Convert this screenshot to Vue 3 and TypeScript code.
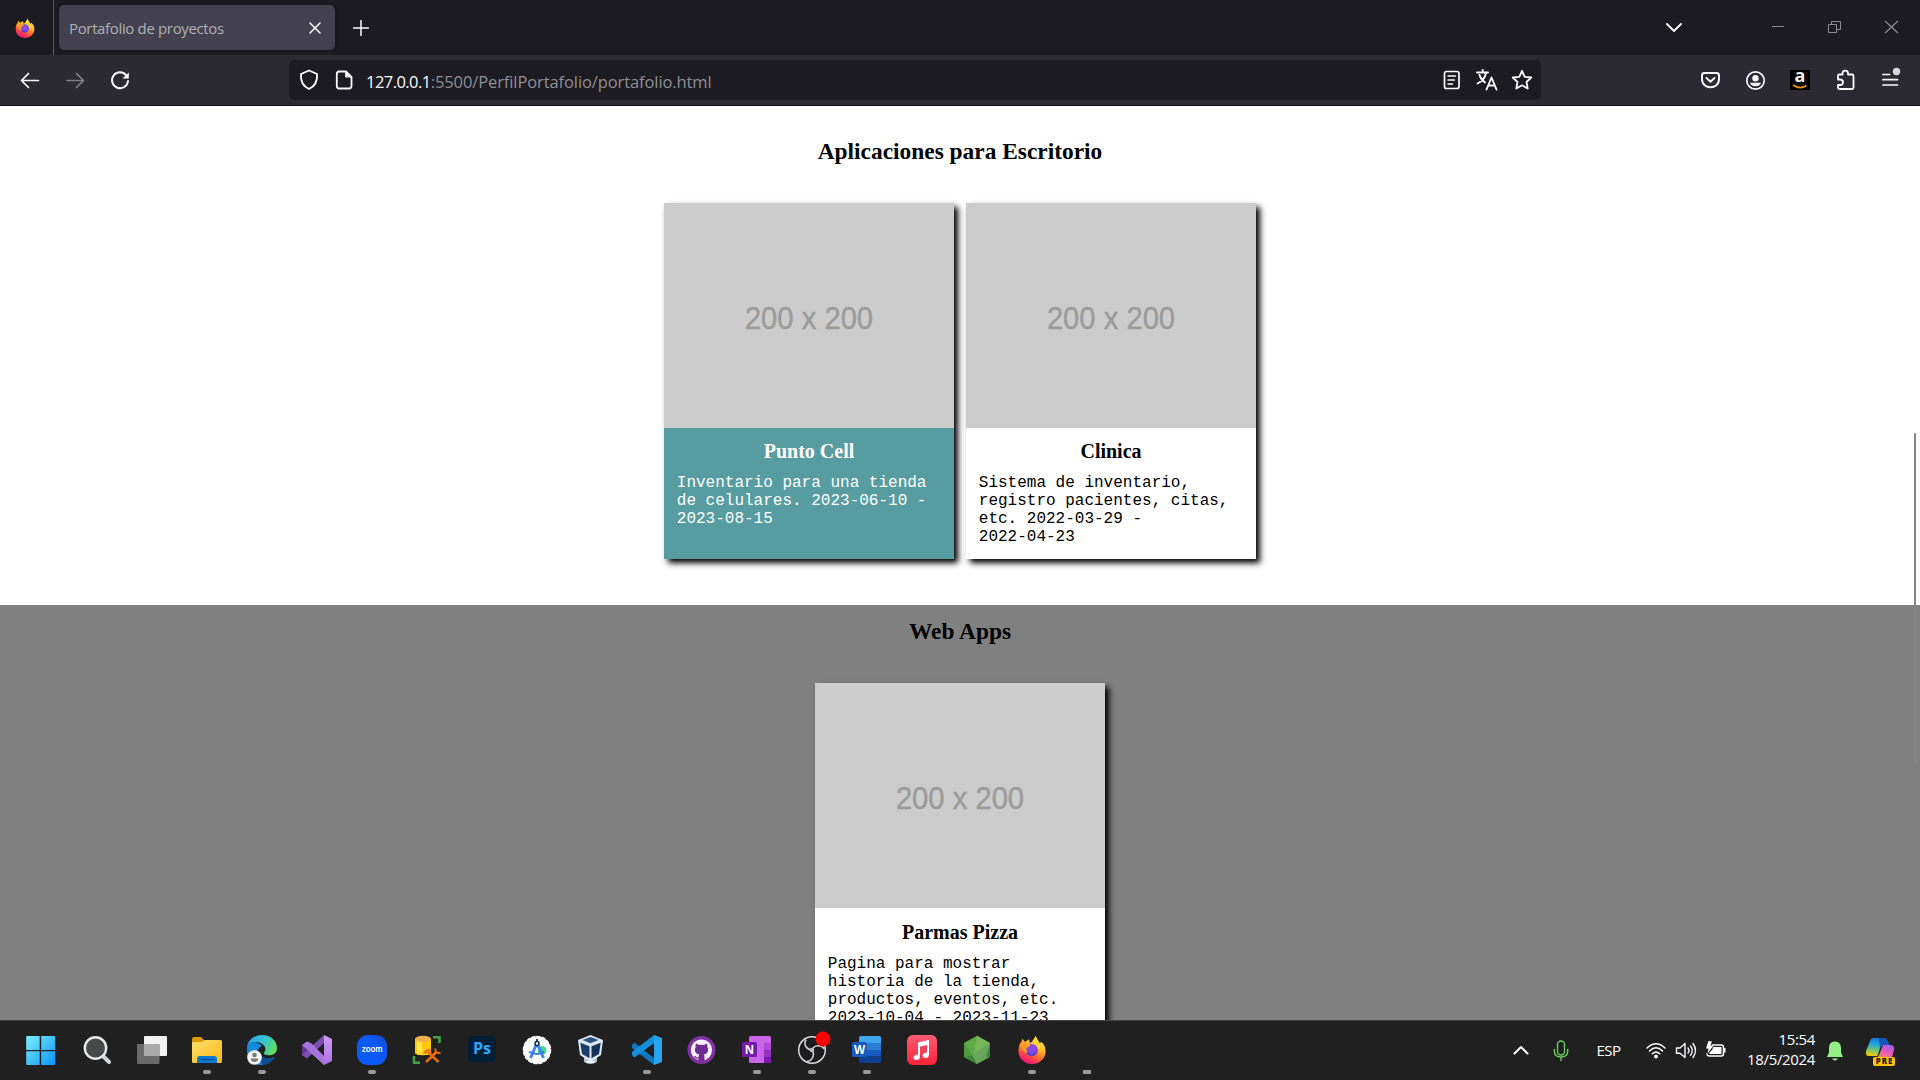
<script setup lang="ts">
interface Project {
  title: string
  lines: string[]
  active?: boolean
}

interface Section {
  title: string
  dark: boolean
  projects: Project[]
}

const sections: Section[] = [
  {
    title: 'Aplicaciones para Escritorio',
    dark: false,
    projects: [
      {
        title: 'Punto Cell',
        lines: ['Inventario para una tienda', 'de celulares. 2023-06-10 -', '2023-08-15'],
        active: true,
      },
      {
        title: 'Clinica',
        lines: ['Sistema de inventario,', 'registro pacientes, citas,', 'etc. 2022-03-29 -', '2022-04-23'],
      },
    ],
  },
  {
    title: 'Web Apps',
    dark: true,
    projects: [
      {
        title: 'Parmas Pizza',
        lines: ['Pagina para mostrar', 'historia de la tienda,', 'productos, eventos, etc.', '2023-10-04 - 2023-11-23'],
      },
    ],
  },
]
</script>

<template>
  <div class="screen">
    <svg class="defs" width="0" height="0" aria-hidden="true">
      <defs>
        <linearGradient id="ffBody" x1="0.8" y1="0" x2="0.3" y2="1">
          <stop offset="0" stop-color="#fff44f" />
          <stop offset="0.35" stop-color="#ffc12e" />
          <stop offset="0.6" stop-color="#ff7a2a" />
          <stop offset="0.8" stop-color="#ff3750" />
          <stop offset="1" stop-color="#e31587" />
        </linearGradient>
        <radialGradient id="ffCore" cx="0.55" cy="0.35" r="0.7">
          <stop offset="0" stop-color="#a14bf5" />
          <stop offset="0.6" stop-color="#7146e0" />
          <stop offset="1" stop-color="#4a3bb5" />
        </radialGradient>
        <linearGradient id="win" x1="0" y1="0" x2="1" y2="1">
          <stop offset="0" stop-color="#7cf0ff" />
          <stop offset="1" stop-color="#0b93f6" />
        </linearGradient>
        <linearGradient id="folder" x1="0" y1="0" x2="1" y2="1">
          <stop offset="0" stop-color="#ffdf6e" />
          <stop offset="1" stop-color="#fbb914" />
        </linearGradient>
        <linearGradient id="edgeTop" x1="0" y1="0.3" x2="1" y2="0.7">
          <stop offset="0" stop-color="#2aa4e8" />
          <stop offset="0.5" stop-color="#35c3cf" />
          <stop offset="1" stop-color="#67e24d" />
        </linearGradient>
        <linearGradient id="vs" x1="0" y1="0" x2="0" y2="1">
          <stop offset="0" stop-color="#d59dff" />
          <stop offset="1" stop-color="#a871e0" />
        </linearGradient>
        <linearGradient id="zoomBg" x1="0" y1="1" x2="1" y2="0">
          <stop offset="0" stop-color="#0b5cff" />
          <stop offset="0.7" stop-color="#0d57f5" />
          <stop offset="1" stop-color="#1a45b8" />
        </linearGradient>
        <linearGradient id="music" x1="0" y1="0" x2="0" y2="1">
          <stop offset="0" stop-color="#ff5c74" />
          <stop offset="1" stop-color="#fa233b" />
        </linearGradient>
        <linearGradient id="copilotA" x1="0.5" y1="0" x2="0.3" y2="1">
          <stop offset="0" stop-color="#1c72e8" />
          <stop offset="0.4" stop-color="#25a9d8" />
          <stop offset="0.75" stop-color="#8ecb5a" />
          <stop offset="1" stop-color="#f2c500" />
        </linearGradient>
        <linearGradient id="copilotB" x1="0.8" y1="0" x2="0.3" y2="1">
          <stop offset="0" stop-color="#a05cf0" />
          <stop offset="0.5" stop-color="#e85ab8" />
          <stop offset="1" stop-color="#ff8f5a" />
        </linearGradient>
        <symbol id="firefox" viewBox="0 0 30 30">
          <path fill="url(#ffBody)" d="M1 17C1 12 2 9 4 7L5 4L7.500 7L9 6.500L12 4.500L12.500 8C14 8.500 15 7 16 5.500C17 4 18 2 19 1C20 5 22 5.500 23 9L24.500 7C28 10 29 13 29 17C29 24.500 22.500 30 15 30C7.500 30 1 24.500 1 17Z" />
          <circle cx="14.700" cy="15.700" r="6.300" fill="url(#ffCore)" />
          <path fill="#ff9a2b" d="M3 10C6 7 11 8 13 10C13.500 12 10.500 12.500 9.500 13.500C9 16 9.500 17 11 18C8 19 4 16 3 10Z" />
          <path fill="#ffd53b" d="M19 1C20 5 22 5.500 23 9C24 12 23 14 22 16C21 11 18 9 15.500 9C17 6 17 4 19 1Z" />
        </symbol>
      </defs>
    </svg>

    <header class="tabs">
      <div class="pinned">
        <svg width="20" height="20"><use href="#firefox" /></svg>
      </div>
      <div class="tab">
        <span class="tab-title">Portafolio de proyectos</span>
        <svg class="line" width="12" height="12" viewBox="0 0 12 12"><path d="M1 1L11 11M11 1L1 11" stroke-width="1.500" /></svg>
      </div>
      <svg class="line new-tab" width="16" height="16" viewBox="0 0 16 16"><path d="M8 .5V15.500M.5 8H15.500" stroke-width="1.500" /></svg>
      <div class="window-buttons">
        <svg class="line list-tabs" width="18" height="12" viewBox="0 0 18 12"><path d="M2 2L9 9L16 2" stroke-width="1.900" /></svg>
        <svg class="win-btn" viewBox="0 0 57 55"><path d="M23 26.500H35" /></svg>
        <svg class="win-btn" viewBox="0 0 57 55"><path d="M22.500 24.500H30.500V32.500H22.500ZM25.500 24.500V21.500H34.500V29.500H30.500" /></svg>
        <svg class="win-btn" viewBox="0 0 57 55"><path d="M22 21L35 33M35 21L22 33" stroke-width="1.200" /></svg>
      </div>
    </header>

    <nav class="toolbar">
      <div class="nav-buttons">
        <svg class="line cell" viewBox="0 0 45 50"><path d="M38.500 25.500H21.500M28.500 18.500L21.500 25.500L28.500 32.500" stroke-width="1.700" /></svg>
        <svg class="line cell dim" viewBox="0 0 45 50"><path d="M22 25.500H38.500M31.500 18.500L38.500 25.500L31.500 32.500" stroke-width="1.700" /></svg>
        <svg class="line cell" viewBox="0 0 45 50">
          <path d="M36.300 20.300A8 8 0 1 0 38 26" stroke-width="1.900" />
          <path d="M38.800 17.500V23.500H32.500Z" fill="#fbfbfe" stroke="none" />
        </svg>
      </div>
      <div class="url">
        <svg class="line shield" width="20" height="22" viewBox="0 0 20 22">
          <path d="M10 1.500L18 5C18.500 11 16.500 17 10 20C3.500 17 1.500 11 2 5Z" stroke-width="1.900" />
        </svg>
        <svg class="line doc" width="18" height="20" viewBox="0 0 18 20">
          <path d="M4 1.500H11L16.500 7V16Q16.500 18.500 14 18.500H4Q1.800 18.500 1.800 16V4Q1.800 1.500 4 1.500Z" stroke-width="1.800" />
          <path d="M11 1.500L16.500 7H11Z" fill="#fbfbfe" />
        </svg>
        <div class="address"><span class="host">127.0.0.1</span><span class="path">:5500/PerfilPortafolio/portafolio.html</span></div>
        <div class="url-actions">
          <svg class="line" width="35" height="24" viewBox="0 0 35 24">
            <rect x="10.500" y="3.500" width="14.500" height="17" rx="2" stroke-width="1.700" />
            <path d="M14 8H21.500M14 12H20.500M14 16H18.500" stroke-width="1.400" />
          </svg>
          <svg class="line" width="35" height="24" viewBox="0 0 35 24">
            <path d="M8 4.500H19M13.700 2V4.500M17 5C16 10 13 13.500 8.500 15.500M10.500 7C11.500 11 14 13 16 14.500" stroke-width="1.900" />
            <path d="M17.500 21.500L22.500 9.500L27.500 21.500M19.300 17.500H25.800" stroke-width="1.900" />
          </svg>
          <svg class="line" width="35" height="24" viewBox="0 0 35 24">
            <path d="M18 2.800L20.700 8.800L27.300 9.500L22.500 14L23.700 20.500L18 17.300L12.300 20.500L13.500 14L8.700 9.500L15.300 8.800Z" stroke-width="1.800" />
          </svg>
        </div>
      </div>
      <div class="extensions">
        <svg class="line cell" viewBox="0 0 45 50">
          <path d="M16.500 18H28.500Q31 18 31 20.500V24C31 35 14 35 14 24V20.500Q14 18 16.500 18Z" stroke-width="1.900" />
          <path d="M18.500 23L22.500 26.700L26.500 23" stroke-width="1.900" />
        </svg>
        <svg class="line cell" viewBox="0 0 45 50">
          <circle cx="22.500" cy="25.500" r="8.700" stroke-width="1.700" />
          <circle cx="22.500" cy="23.300" r="3.200" fill="#fbfbfe" stroke="none" />
          <path d="M17 27.800H28C27 32.500 18 32.500 17 27.800Z" fill="#fbfbfe" stroke="none" />
        </svg>
        <div class="cell amazon">
          <div class="amazon-tile">
            <span>a</span>
            <svg width="16" height="5" viewBox="0 0 16 5"><path d="M1 1Q8 6 14.500 1.500" fill="none" stroke="#f39200" stroke-width="1.600" /></svg>
          </div>
        </div>
        <svg class="line cell" viewBox="0 0 45 50">
          <path d="M15 22.500V20.800Q15 19.500 16.500 19.500H19.500V18.500C19.500 14.700 25 14.700 25 18.500V19.500H29Q30.500 19.500 30.500 21V32.500Q30.500 34 29 34H16.500Q15 34 15 32.500V30H17C21 30 21 24.500 17 24.500H15Z" stroke-width="1.800" />
        </svg>
        <svg class="line cell" viewBox="0 0 45 50">
          <path d="M15 19.500H21.500M15 24.700H29.500M15 30H29.500" stroke-width="1.700" />
          <circle cx="28.500" cy="16.500" r="3.700" fill="#d8d8dc" stroke="none" />
        </svg>
      </div>
    </nav>

    <main class="page">
      <section v-for="section in sections" :key="section.title" class="section" :class="{ dark: section.dark }">
        <h3>{{ section.title }}</h3>
        <div class="cards">
          <article v-for="project in section.projects" :key="project.title" class="card" :class="{ active: project.active }">
            <div class="thumb"><span>200 x 200</span></div>
            <h4>{{ project.title }}</h4>
            <p><span v-for="line in project.lines" :key="line">{{ line }}</span></p>
          </article>
        </div>
      </section>
      <div class="scroll-thumb"></div>
    </main>

    <footer class="taskbar">
      <div class="apps">
        <div class="app">
          <svg viewBox="0 0 30 30"><path fill="url(#win)" d="M0 1Q0 0 1 0H13.500V14H0ZM15 0H28Q29 0 29 1V14H15ZM0 15.300H13.500V29H1Q0 29 0 28ZM15 15.300H29V28Q29 29 28 29H15Z" transform="translate(-.8 1)" /></svg>
        </div>
        <div class="app">
          <svg viewBox="0 0 30 30">
            <path d="M21 21L27 27" stroke="#d0d3d6" stroke-width="4" stroke-linecap="round" />
            <circle cx="13.500" cy="13" r="10.700" fill="#484848" stroke="#e4e8ea" stroke-width="2.400" />
          </svg>
        </div>
        <div class="app">
          <svg viewBox="0 0 30 30">
            <rect x="7" y="1" width="23" height="20" rx="1" fill="#f2f2f2" />
            <rect x="0" y="9" width="22.500" height="20" rx="1" fill="#6a6a6a" />
            <path d="M7 9H22.500V21H7Z" fill="#aaa" />
          </svg>
        </div>
        <div class="app running">
          <svg viewBox="0 0 30 30">
            <path fill="#dd9a00" d="M0 4Q0 2 2 2H9L12 5H14V10H0Z" />
            <path fill="url(#folder)" d="M0 8Q0 7 1 7H10L13 5H28.500Q30 5 30 6.500V26.500Q30 28 28.500 28H1.500Q0 28 0 26.500Z" />
            <path fill="#0877ce" d="M5 28V24Q5 21 8 21H22Q25 21 25 24V28Z" />
            <path d="M8.500 24.500H21.500" stroke="#064a8f" stroke-width="1.200" />
          </svg>
        </div>
        <div class="app running">
          <svg viewBox="0 0 30 30">
            <path fill="#1267b5" d="M0 12C0 5 10 5 15 11C11 12 10 16 13 20C17 25 24 23 27.500 22C25 27 20 30 14 30C6 30 0 24 0 15Z" />
            <path fill="url(#edgeTop)" d="M.3 11C2 4 8 0 15 0C24 0 30 6 30 13C30 19 25 21 20 20C17 19.500 16 18.500 18 16C20 12 15 7 9 7C5 7 2 8.500.3 11Z" />
            <path fill="#148ada" d="M.5 11C4 7 12 7 14.500 11C8 13 8 22 16 29.800C7 31 0 24 0 15Z" />
            <path fill="#0c4f91" d="M14 20C17 25 24 23 28 22C24 28 19 30 15 30Z" />
            <circle cx="7.500" cy="22.500" r="7.300" fill="#f3f3f3" />
            <circle cx="7.500" cy="20" r="2.300" fill="#777" />
            <path fill="#777" d="M4 23.500H11V25Q10.500 27 7.500 27Q4.500 27 4 25Z" />
          </svg>
        </div>
        <div class="app">
          <svg viewBox="0 0 30 30">
            <path fill="#5f3b87" d="M0 10L5 6.500V23.500L0 20Z" />
            <path fill="#7a4fad" d="M5 23.500L22 8V0L0 20Z" />
            <path fill="#a574dd" d="M5 6.500L9 8L22 21V30L0 10Z" />
            <path fill="url(#vs)" d="M22 0L30 4V26L22 30Z" />
          </svg>
        </div>
        <div class="app running">
          <svg viewBox="0 0 30 30">
            <rect width="30" height="30" rx="11" fill="url(#zoomBg)" />
            <text x="15" y="16.800" fill="#fff" font-family="Inter, sans-serif" font-size="8" font-weight="600" text-anchor="middle" textLength="21">zoom</text>
          </svg>
        </div>
        <div class="app">
          <svg viewBox="0 0 30 30">
            <path fill="#ffcb00" d="M3 4H19V18C19 21 3 21 3 18Z" />
            <path fill="#ffe45a" d="M5 5H10V20L5 19Z" />
            <ellipse cx="11" cy="4" rx="8" ry="3.300" fill="#f2b04c" />
            <path d="M21 2.200H27.500V8M2 21V27.700H8" fill="none" stroke="#43a047" stroke-width="2.600" />
            <path d="M14 27L25 16.500M16 17L26.500 27" stroke="#ef6c00" stroke-width="2.500" />
            <path d="M12.500 18.500Q14 15 18.500 15" fill="none" stroke="#ef6c00" stroke-width="2.600" />
            <path d="M23.500 13.500Q22.500 18.500 28.500 18" fill="none" stroke="#ef6c00" stroke-width="2" />
          </svg>
        </div>
        <div class="app">
          <svg viewBox="0 0 30 30">
            <rect x="1" y="1" width="28" height="26" rx="4.500" fill="#001e36" />
            <text x="15" y="19" fill="#31a8ff" font-family="Open Sans, sans-serif" font-size="15.500" font-weight="700" text-anchor="middle" textLength="18" lengthAdjust="spacingAndGlyphs">Ps</text>
          </svg>
        </div>
        <div class="app">
          <svg viewBox="0 0 30 30">
            <circle cx="15" cy="15" r="13.700" fill="#fff" stroke="#fff" stroke-width="1.200" stroke-dasharray="4 1.300" />
            <circle cx="20" cy="15.500" r="4.500" fill="#3ddc84" />
            <path d="M15 8L8.500 23M15 8L21.500 23" stroke="#4285f4" stroke-width="3" />
            <path d="M7 16.500Q15 21.500 22 16.500" fill="none" stroke="#3474dd" stroke-width="2" />
            <circle cx="15" cy="8.500" r="2" fill="#fff" stroke="#073042" stroke-width="1.500" />
            <path d="M15 4V7" stroke="#073042" stroke-width="1.800" />
          </svg>
        </div>
        <div class="app">
          <svg viewBox="0 0 30 30">
            <path fill="#aebfd6" d="M7 21H20V27Q13.500 31 7 27Z" />
            <path fill="#dce8f5" d="M1 5L13.500 0L26 5L24 20L13.500 27L3 20Z" />
            <path fill="#2c4f7c" d="M5.500 5L13.500 2L21.500 5L13.500 8.200Z" />
            <path fill="#1b3d66" d="M3.300 7.700L12.500 11.200V23.300L5 19Z" />
            <path fill="#15325a" d="M23.700 7.700L14.500 11.200V23.300L22 19Z" />
            <path d="M9.500 27H17.500" stroke="#eef5ff" stroke-width="2" />
          </svg>
        </div>
        <div class="app running">
          <svg viewBox="0 0 30 30">
            <path fill="#0b78bf" d="M0 10L2.500 7.500L23 24L22 30L0 13Z" />
            <path fill="#1390dc" d="M0 20L2.500 22.500L22 8V0L0 17Z" />
            <path fill="#27a6ee" d="M22 0L30 3V27L22 30Z" />
          </svg>
        </div>
        <div class="app">
          <svg viewBox="0 0 30 30">
            <circle cx="14.500" cy="15" r="14" fill="#7f32a0" />
            <circle cx="14.500" cy="15" r="10.600" fill="#f8f1fb" />
            <path fill="#6f2b90" d="M9 8.500L12 10Q14.500 9.300 17 10L20 8.500Q20.800 10.500 20.300 12Q21.500 13.700 21 16Q20.200 19 16.700 19.500Q17.500 20.500 17.500 22V26H11.500V23.500Q9 24 8 22.500Q7.500 21.500 6.800 21Q8.500 20.500 9.300 22Q10.300 23 11.500 22.300Q11.500 20.500 12.300 19.500Q8.800 19 8 16Q7.500 13.700 8.700 12Q8.200 10.500 9 8.500Z" />
          </svg>
        </div>
        <div class="app running">
          <svg viewBox="0 0 30 30">
            <rect x="7" y="1" width="22" height="27" rx="1.500" fill="#ca64ea" />
            <path fill="#ae4bd5" d="M22 8H29V15H22Z" />
            <path fill="#9332bf" d="M22 15H29V22H22Z" />
            <path fill="#7719aa" d="M22 22H29V26.500Q29 28 27.500 28H22Z" />
            <rect x="0" y="7" width="15" height="15" rx="1.500" fill="#7719aa" />
            <text x="7.500" y="18.500" fill="#fff" font-family="Open Sans, sans-serif" font-size="11.500" font-weight="700" text-anchor="middle">N</text>
          </svg>
        </div>
        <div class="app running">
          <svg viewBox="0 0 34 30" class="wide">
            <circle cx="15" cy="15" r="13.300" fill="#1c1b1e" stroke="#dcdcdc" stroke-width="1.500" />
            <path d="M15 15C10 15 6 10 9 4.500M15 15C17 10 24 9 27.500 14M15 15C18 19 16 26 10 26.500" fill="none" stroke="#c9c9c9" stroke-width="1.700" />
            <circle cx="15" cy="15" r="2.300" fill="#bbb" />
            <circle cx="26" cy="4" r="7.500" fill="#f00" />
          </svg>
        </div>
        <div class="app running">
          <svg viewBox="0 0 30 30">
            <path fill="#41a5ee" d="M7 2.500Q7 1 8.500 1H27.500Q29 1 29 2.500V8H7Z" />
            <path fill="#2b7cd3" d="M7 8H29V15H7Z" />
            <path fill="#185abd" d="M7 15H29V21.500H7Z" />
            <path fill="#103f91" d="M7 21.500H29V26.500Q29 28 27.500 28H8.500Q7 28 7 26.500Z" />
            <rect x="0" y="7" width="15" height="15" rx="1.500" fill="#185abd" />
            <text x="7.500" y="18.500" fill="#fff" font-family="Open Sans, sans-serif" font-size="11.500" font-weight="700" text-anchor="middle">W</text>
          </svg>
        </div>
        <div class="app">
          <svg viewBox="0 0 30 30">
            <rect width="30" height="30" rx="6" fill="url(#music)" />
            <path fill="#fff" d="M11 7.500L22 5V19.500C22 24 15.500 24 15.500 20.500C15.500 18.500 18 17.500 20 17.500V10L13 11.500V22C13 26 6.500 26 6.500 22.500C6.500 20.500 9 19.800 11 19.500Z" />
          </svg>
        </div>
        <div class="app">
          <svg viewBox="0 0 30 30">
            <path fill="#5fa94b" d="M15 .8L28 8V22L15 29L2 22V8Z" />
            <path fill="#7bb95a" d="M15 .8L28 8L11 22Z" opacity=".8" />
            <path fill="#3b8739" d="M2 22L10 20L15 29ZM28 8V22L22 22Z" />
            <path fill="#4b9a40" d="M2 8L10 20L2 22Z" />
            <path fill="#6aa35e" d="M28 8L10 20L15 29L24 22Z" />
          </svg>
        </div>
        <div class="app running">
          <svg viewBox="0 0 30 30"><use href="#firefox" width="30" height="29" /></svg>
        </div>
        <div class="app running square"></div>
      </div>

      <div class="tray">
        <svg class="line tray-cell" viewBox="0 0 40 58"><path d="M13.500 31.500L20 25L26.500 31.500" stroke-width="2" /></svg>
        <svg class="line tray-cell mic" viewBox="0 0 40 58">
          <rect x="16.500" y="19" width="7" height="14" rx="3.500" stroke-width="1.400" />
          <path d="M13.300 27.500V29Q13.300 35 20 35Q26.700 35 26.700 29V27.500M20 35V38.500" stroke-width="1.400" />
        </svg>
        <span class="lang">ESP</span>
        <svg class="line quick" viewBox="0 0 30 58">
          <path d="M6 26Q15 17.500 24 26M8.500 29Q15 22.500 21.500 29M11.300 31.800Q15 28 18.700 31.800" stroke-width="1.500" />
          <circle cx="15" cy="34.500" r="1.900" fill="#fff" stroke="none" />
        </svg>
        <svg class="line quick" viewBox="0 0 30 58">
          <path d="M5.500 26H9L14 21.500V35.500L9 31.200H5.500ZM17 26Q19 28.500 17 31M19.500 24Q23 28.500 19.500 33.300M22 21.500Q27 28.500 22 35.500" stroke-width="1.400" />
        </svg>
        <svg class="line quick" viewBox="0 0 30 58">
          <path d="M11.500 23H20.500Q22.500 23 22.500 25.500V31.500Q22.500 34 20.500 34H8.500Q6 34 6 32" stroke-width="1.400" />
          <path d="M12 25H20.500V32H8.500V30.500L11.500 27.500ZM23 26H24.500V30.500H23ZM7.500 19L5 26.500H7.500L6.500 31.500L12.500 23.500H9.500L11 19.500Z" fill="#fff" stroke="none" />
        </svg>
        <div class="clock"><span>15:54</span><span>18/5/2024</span></div>
        <svg class="tray-cell" viewBox="0 0 40 58">
          <path fill="#94ef85" d="M20 19.500C24.500 19.500 26 22.500 26 26.500V30.500L28 35H12L14 30.500V26.500C14 22.500 15.500 19.500 20 19.500ZM17 36.500H23Q22 38.500 20 38.500Q18 38.500 17 36.500Z" />
        </svg>
        <svg class="copilot" viewBox="0 0 50 58">
          <path fill="url(#copilotA)" d="M16 17Q17 16 19 16H29Q32 16 33 20L34 23H29Q26 23 25 26L22.500 34H14Q10 34 11 29Z" />
          <path fill="url(#copilotB)" d="M28 23H35Q40 23 39 28L36.500 37H20Q23 36 24.500 32Z" />
          <path fill="#1555b8" d="M24 16H29Q32 16 33 20L34 23H29Q26 23 25 26Z" />
          <rect x="18" y="35" width="22" height="9" rx="2" fill="#ffc400" />
          <text x="29" y="42.300" fill="#1c1800" font-family="Open Sans, sans-serif" font-size="7.800" font-weight="800" text-anchor="middle" textLength="16.500">PRE</text>
        </svg>
      </div>
    </footer>
  </div>
</template>

<style>
html,
body {
  margin: 0;
  overflow: hidden;
}
</style>

<style scoped>
.screen {
  display: flex;
  flex-direction: column;
  width: 1920px;
  height: 1080px;
  overflow: hidden;
  background: #fff;
  font-family: 'Open Sans', 'Noto Sans', sans-serif;
}

.defs {
  position: absolute;
}

svg {
  display: block;
  flex: none;
}

.line {
  fill: none;
  stroke: #fbfbfe;
  stroke-linecap: round;
  stroke-linejoin: round;
}

.tabs {
  display: flex;
  flex: none;
  align-items: center;
  height: 55px;
  background: #1c1b22;
}

.pinned {
  box-sizing: border-box;
  display: flex;
  align-items: center;
  width: 54px;
  height: 55px;
  padding-left: 15px;
  border-right: 1px solid #5b5a62;
}

.tab {
  box-sizing: border-box;
  display: flex;
  align-items: center;
  justify-content: space-between;
  width: 276px;
  height: 45px;
  margin-left: 5px;
  padding: 0 14.5px 0 10px;
  border-radius: 5px;
  background: #42414d;
  box-shadow: 0 0 4px rgba(0, 0, 0, 0.4);
}

.tab-title {
  color: #b0b0b7;
  font-size: 15px;
  letter-spacing: -0.35px;
  line-height: 20px;
  white-space: nowrap;
}

.new-tab {
  margin-left: 18px;
}

.window-buttons {
  display: flex;
  align-items: center;
  margin-left: auto;
}

.list-tabs {
  margin-right: 66px;
}

.win-btn {
  width: 57px;
  height: 55px;
  fill: none;
  stroke: #8d8d91;
}

.toolbar {
  box-sizing: border-box;
  display: flex;
  flex: none;
  align-items: center;
  height: 51px;
  border-bottom: 1px solid #0c0c0d;
  background: #2b2a33;
}

.nav-buttons {
  display: flex;
  width: 289px;
}

.cell {
  width: 45px;
  height: 50px;
}

.dim {
  opacity: 0.4;
}

.url {
  box-sizing: border-box;
  display: flex;
  align-items: center;
  width: 1252px;
  height: 40px;
  padding-left: 10px;
  border-radius: 5px;
  background: #1c1b22;
}

.doc {
  margin-left: 16px;
}

.address {
  margin-left: 13px;
  padding-top: 3px;
  color: #8f8f95;
  font-size: 16.5px;
  line-height: 24px;
  white-space: nowrap;
}

.host {
  color: #fbfbfe;
  letter-spacing: -0.55px;
}

.path {
  letter-spacing: -0.1px;
}

.url-actions {
  display: flex;
  margin-left: auto;
  margin-right: 2px;
}

.extensions {
  display: flex;
  margin-left: 146.5px;
}

.amazon {
  display: flex;
  align-items: center;
  justify-content: center;
}

.amazon-tile {
  display: flex;
  flex-direction: column;
  align-items: center;
  width: 20px;
  height: 20px;
  border-radius: 1px;
  background: #000;
  color: #eee;
  font-size: 18px;
  font-weight: 700;
}

.amazon-tile span {
  height: 14px;
  line-height: 11px;
}

.page {
  position: relative;
  box-sizing: border-box;
  flex: none;
  height: 914px;
  padding-top: 19px;
  overflow: hidden;
  background: #fff;
}

.section {
  box-sizing: border-box;
  height: 480px;
  padding-top: 13px;
}

.section.dark {
  background: #808080;
}

.section h3 {
  margin: 0 0 38px;
  color: #000;
  font: 700 23.4px/27px 'Liberation Serif', serif;
  text-align: center;
}

.cards {
  display: flex;
  justify-content: center;
  gap: 12px;
}

.card {
  width: 290px;
  height: 356px;
  background: #fff;
  box-shadow: 3.5px 3.5px 6px #000;
  color: #000;
}

.card.active {
  background: #569ca0;
  color: #fff;
}

.thumb {
  display: flex;
  align-items: center;
  justify-content: center;
  height: 225px;
  background: #ccc;
}

.thumb span {
  padding-top: 5px;
  color: #9b9b9b;
  font: 29.2px/36px 'Liberation Sans', sans-serif;
  transform: scaleY(1.1);
  -webkit-text-stroke: 0.4px #9b9b9b;
}

.card h4 {
  margin: 11px 0;
  font: 700 20px/24px 'Liberation Serif', serif;
  text-align: center;
}

.dark .card h4 {
  margin-top: 12px;
}

.card p {
  margin: 0 0 0 12.8px;
  font: 16px/18px 'Liberation Mono', monospace;
  white-space: nowrap;
}

.card p span {
  display: block;
}

.scroll-thumb {
  position: absolute;
  top: 327px;
  right: 4px;
  width: 2px;
  height: 330px;
  border-radius: 1px;
  background: #858585;
}

.taskbar {
  box-sizing: border-box;
  display: flex;
  flex: none;
  justify-content: space-between;
  height: 60px;
  border-top: 1px solid #454545;
  background: #202020;
}

.apps {
  display: flex;
  padding-left: 14px;
}

.app {
  display: flex;
  flex-direction: column;
  align-items: center;
  width: 55px;
  padding-top: 14px;
}

.app svg {
  width: 30px;
  height: 30px;
  overflow: visible;
}

.app svg.wide {
  width: 34px;
  margin-left: 4px;
}

.running::after {
  width: 8px;
  height: 4px;
  margin-top: 5px;
  border-radius: 2px;
  background: #9a9a9a;
  content: '';
}

.running.square::after {
  margin-top: 35px;
  border-radius: 0;
}

.tray {
  display: flex;
  align-items: center;
  padding-right: 15px;
  color: #fff;
  font-size: 15px;
}

.tray-cell {
  width: 40px;
  height: 58px;
}

.mic {
  stroke: #6ccb5f;
}

.lang {
  width: 55px;
  margin-right: 5px;
  padding-bottom: 2px;
  letter-spacing: -0.6px;
  text-align: center;
}

.quick {
  width: 30px;
  height: 58px;
}

.clock {
  display: flex;
  flex-direction: column;
  width: 84px;
  padding-bottom: 3px;
  letter-spacing: -0.35px;
  line-height: 20px;
  text-align: right;
}

.copilot {
  width: 50px;
  height: 58px;
}
</style>
